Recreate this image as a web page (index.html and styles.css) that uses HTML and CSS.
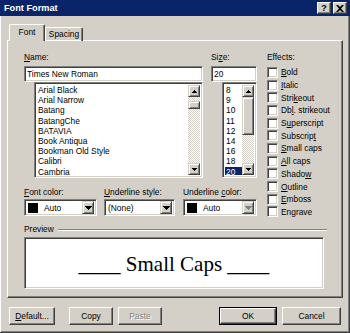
FILE: index.html
```html
<!DOCTYPE html>
<html>
<head>
  <meta charset='UTF-8'>
  <title>Font Format</title>
  <link rel="stylesheet" href="styles.css">
</head>
<body>
  <div class='window'>
    <!-- Title bar -->
    <div class='titlebar'>
      <span class='title'>Font Format</span>
      <div class='title-btns'>
        <span class='tbtn'>?</span>
        <span class='tbtn'><svg width='8' height='7' viewBox='0 0 8 7'><path d='M0 0h2l2 2 2-2h2L5 3.5 8 7H6L4 5 2 7H0l3-3.5z'/></svg></span>
      </div>
    </div>

    <div class='body'>
      <!-- Tabs -->
      <div class='tabs'>
        <div class='tab active'>Font</div>
        <div class='tab'>Spacing</div>
      </div>

      <div class='panel'>
        <div class='main'>
          <div class='left'>
            <div class='fields'>
              <div class='field name-field'>
                <div class='label'><u>N</u>ame:</div>
                <div class='input'>Times New Roman</div>
                <div class='list font-list'>
                  <ul>
                    <li>Arial Black</li>
                    <li>Arial Narrow</li>
                    <li>Batang</li>
                    <li>BatangChe</li>
                    <li>BATAVIA</li>
                    <li>Book Antiqua</li>
                    <li>Bookman Old Style</li>
                    <li>Calibri</li>
                    <li>Cambria</li>
                  </ul>
                  <div class='scrollbar'>
                    <span class='sbtn'><svg width='5' height='3'><path d='M2 0h1v1h1v1h1v1H0V2h1V1h1z'/></svg></span>
                    <div class='track'><span class='thumb small'></span></div>
                    <span class='sbtn'><svg width='5' height='3'><path d='M0 0h5v1H4v1H3v1H2V2H1V1H0z'/></svg></span>
                  </div>
                </div>
              </div>
              <div class='field size-field'>
                <div class='label'>Si<u>z</u>e:</div>
                <div class='input'>20</div>
                <div class='list size-list'>
                  <ul>
                    <li>8</li>
                    <li>9</li>
                    <li>10</li>
                    <li>11</li>
                    <li>12</li>
                    <li>14</li>
                    <li>16</li>
                    <li>18</li>
                    <li class='selected'>20</li>
                  </ul>
                  <div class='scrollbar'>
                    <span class='sbtn'><svg width='5' height='3'><path d='M2 0h1v1h1v1h1v1H0V2h1V1h1z'/></svg></span>
                    <div class='track'><span class='thumb large'></span></div>
                    <span class='sbtn'><svg width='5' height='3'><path d='M0 0h5v1H4v1H3v1H2V2H1V1H0z'/></svg></span>
                  </div>
                </div>
              </div>
            </div>

            <div class='combos'>
              <div class='combo-group color-group'>
                <div class='label'><u>F</u>ont color:</div>
                <div class='combo'>
                  <span class='swatch'></span><span class='combo-text'>Auto</span>
                  <span class='dbtn'><svg width='7' height='4'><path d='M0 0h7v1H6v1H5v1H4v1H3V3H2V2H1V1H0z'/></svg></span>
                </div>
              </div>
              <div class='combo-group style-group'>
                <div class='label'><u>U</u>nderline style:</div>
                <div class='combo'>
                  <span class='combo-text plain'>(None)</span>
                  <span class='dbtn'><svg width='7' height='4'><path d='M0 0h7v1H6v1H5v1H4v1H3V3H2V2H1V1H0z'/></svg></span>
                </div>
              </div>
              <div class='combo-group ucolor-group'>
                <div class='label'>Underline <u>c</u>olor:</div>
                <div class='combo'>
                  <span class='swatch'></span><span class='combo-text'>Auto</span>
                  <span class='dbtn disabled'><svg width='7' height='4'><path d='M0 0h7v1H6v1H5v1H4v1H3V3H2V2H1V1H0z'/></svg></span>
                </div>
              </div>
            </div>
          </div>

          <!-- Effects -->
          <div class='effects'>
            <div class='label'>Effects:</div>
            <div class='check'><span class='box'></span><span><u>B</u>old</span></div>
            <div class='check'><span class='box'></span><span><u>I</u>talic</span></div>
            <div class='check'><span class='box'></span><span>Stri<u>k</u>eout</span></div>
            <div class='check'><span class='box'></span><span>Db<u>l</u>. strikeout</span></div>
            <div class='check'><span class='box'></span><span>S<u>u</u>perscript</span></div>
            <div class='check'><span class='box'></span><span>Subscrip<u>t</u></span></div>
            <div class='check'><span class='box'></span><span><u>S</u>mall caps</span></div>
            <div class='check'><span class='box'></span><span><u>A</u>ll caps</span></div>
            <div class='check'><span class='box'></span><span>Shado<u>w</u></span></div>
            <div class='check'><span class='box'></span><span><u>O</u>utline</span></div>
            <div class='check'><span class='box'></span><span><u>E</u>mboss</span></div>
            <div class='check'><span class='box'></span><span>Engrave</span></div>
          </div>
        </div>

        <!-- Preview -->
        <div class='preview'>
          <div class='preview-head'><span class='label'>Preview</span><span class='groove'></span></div>
          <div class='preview-box'>____ Small Caps ____</div>
        </div>
      </div>

      <!-- Buttons -->
      <div class='buttons'>
        <button class='btn btn-default'><u>D</u>efault...</button>
        <button class='btn btn-copy'>Copy</button>
        <button class='btn btn-paste' disabled>Paste</button>
        <span class='spacer'></span>
        <span class='ok-frame'><button class='btn btn-ok'>OK</button></span>
        <button class='btn btn-cancel'>Cancel</button>
      </div>
    </div>
  </div>
</body>
</html>
```

FILE: styles.css
```css
* { margin: 0; padding: 0; box-sizing: border-box; }
body { font-family: "Liberation Sans", Arial, sans-serif; font-size: 8.4px; color: #000; background: #d4d0c8; }
u { text-decoration: underline; text-underline-offset: 1px; }

.window { width: 350px; height: 333px; background: #d4d0c8; display: flex; flex-direction: column; }

/* title bar */
.titlebar { height: 16px; background: #0a246a; display: flex; align-items: center; justify-content: space-between; padding: 0 3px 0 4px; }
.title { color: #fff; font-weight: bold; font-size: 9.2px; }
.title-btns { display: flex; gap: 2px; }
.tbtn { width: 14px; height: 12px; background: #d4d0c8; border: 1px solid; border-color: #fff #404040 #404040 #fff; box-shadow: inset -1px -1px #808080; display: flex; align-items: center; justify-content: center; font-weight: bold; font-size: 9px; line-height: 1; }
.tbtn svg { display: block; }

.body { flex: 1; padding: 8px 0 0 7px; box-shadow: inset -1px -1px #404040, inset 1px 0 #fff, inset -2px -2px #808080; }

/* tabs */
.tabs { display: flex; align-items: flex-end; height: 17px; padding-left: 2px; }
.tab { height: 14px; padding-top: 1px; text-align: center; border: 1px solid; border-bottom: none; border-color: #fff #404040 #fff #fff; border-radius: 2px 2px 0 0; box-shadow: inset -1px 0 #808080; }
.tab.active { height: 17px; width: 36px; padding-top: 2px; position: relative; z-index: 1; background: #d4d0c8; }
.tab:not(.active) { width: 38px; }

.panel { width: 336px; height: 258px; margin-top: -1px; border: 1px solid; border-color: #fff #404040 #404040 #fff; box-shadow: inset -1px -1px #808080; padding: 11px 0 0 16px; }

.main { display: flex; }
.left { width: 233px; }
.label { height: 11px; line-height: 11px; margin-bottom: 3px; white-space: nowrap; }

.fields { display: flex; gap: 8px; }
.name-field { width: 179px; }
.size-field { width: 46px; }

/* sunken controls */
.input, .list, .combo, .preview-box, .box { background: #fff; border: 1px solid; border-color: #808080 #fff #fff #808080; box-shadow: inset 1px 1px #404040, inset -1px -1px #d4d0c8; }
.input { height: 16px; padding: 2px 0 0 2px; line-height: 11px; }

.list { height: 96px; display: flex; padding: 2px; overflow: hidden; }
.font-list { margin-left: 10px; }
.size-list { margin-left: 11px; }
.list ul { list-style: none; flex: 1; overflow: hidden; }
.list li { height: 10.2px; line-height: 10.2px; padding-left: 1px; white-space: nowrap; }
.list li.selected { background: #0a246a; color: #fff; }

.scrollbar { width: 12px; display: flex; flex-direction: column; }
.sbtn, .dbtn { background: #d4d0c8; border: 1px solid; border-color: #d4d0c8 #404040 #404040 #d4d0c8; box-shadow: inset 1px 1px #fff, inset -1px -1px #808080; display: flex; align-items: center; justify-content: center; }
.sbtn { height: 12px; }
.sbtn svg, .dbtn svg { display: block; }
.track { flex: 1; background: repeating-conic-gradient(#d4d0c8 0 25%, #fff 0 50%) 0 0 / 2px 2px; }
.thumb { display: block; background: #d4d0c8; border: 1px solid; border-color: #d4d0c8 #404040 #404040 #d4d0c8; box-shadow: inset 1px 1px #fff, inset -1px -1px #808080; }
.thumb.small { height: 8px; margin-top: 4px; }
.thumb.large { height: 38px; margin-top: 0; }

/* combos */
.combos { display: flex; margin-top: 9px; }
.color-group { width: 73px; margin-right: 7px; }
.style-group { width: 71px; margin-right: 8px; }
.ucolor-group { width: 74px; }
.combos .label { margin-bottom: 1px; }
.combo { height: 17px; display: flex; align-items: center; padding: 2px; }
.swatch { width: 10px; height: 10px; background: #000; margin-left: 1px; }
.combo-text { flex: 1; padding-left: 6px; }
.combo-text.plain { padding-left: 1px; }
.dbtn { width: 12px; height: 13px; }
.dbtn.disabled svg { fill: #808080; }

/* effects */
.effects { margin-left: 10px; }
.check { height: 12.7px; display: flex; align-items: center; white-space: nowrap; }
.box { width: 11px; height: 11px; margin-right: 3px; flex: none; }

/* preview */
.preview { margin-top: 6px; }
.preview-head { display: flex; align-items: center; height: 11px; margin-right: 15px; }
.preview-head .label { margin-bottom: 0; }
.groove { flex: 1; margin-left: 4px; border-top: 1px solid #808080; border-bottom: 1px solid #fff; }
.preview-box { width: 300px; height: 52px; margin-top: 2px; display: flex; align-items: center; justify-content: center; font-family: "Liberation Serif", "Times New Roman", serif; font-size: 21px; padding-top: 2px; }

/* buttons */
.buttons { display: flex; margin: 9px 0 0 2px; align-items: flex-start; }
.btn { height: 18px; font-family: inherit; font-size: 8.4px; background: #d4d0c8; color: #000; border: 1px solid; border-color: #fff #404040 #404040 #fff; box-shadow: inset -1px -1px #808080; }
.btn-default { width: 46px; margin-right: 14px; }
.btn-copy { width: 44px; margin-right: 5px; }
.btn-paste { width: 44px; color: #808080; text-shadow: 1px 1px #fff; }
.spacer { width: 57px; }
.ok-frame { border: 1px solid #000; width: 58px; height: 18px; margin-right: 5px; display: flex; }
.btn-ok { width: 56px; height: 16px; }
.btn-cancel { width: 59px; }
```
